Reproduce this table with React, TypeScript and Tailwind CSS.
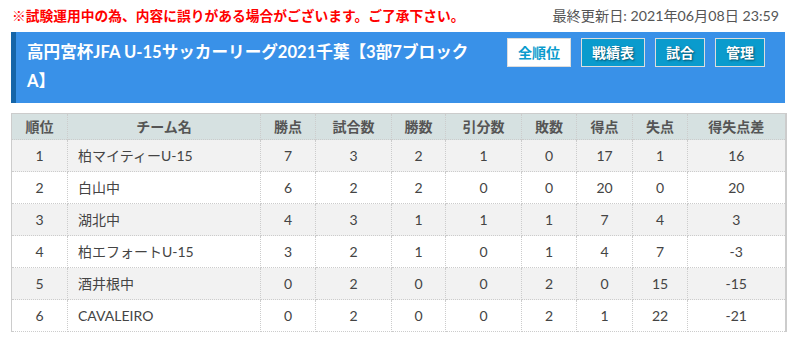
const rows = [
  { rank: 1, team: '柏マイティーU-15', pts: 7, games: 3, win: 2, draw: 1, lose: 0, gf: 17, ga: 1, diff: 16 },
  { rank: 2, team: '白山中', pts: 6, games: 2, win: 2, draw: 0, lose: 0, gf: 20, ga: 0, diff: 20 },
  { rank: 3, team: '湖北中', pts: 4, games: 3, win: 1, draw: 1, lose: 1, gf: 7, ga: 4, diff: 3 },
  { rank: 4, team: '柏エフォートU-15', pts: 3, games: 2, win: 1, draw: 0, lose: 1, gf: 4, ga: 7, diff: -3 },
  { rank: 5, team: '酒井根中', pts: 0, games: 2, win: 0, draw: 0, lose: 2, gf: 0, ga: 15, diff: -15 },
  { rank: 6, team: 'CAVALEIRO', pts: 0, games: 2, win: 0, draw: 0, lose: 2, gf: 1, ga: 22, diff: -21 },
]

const heads = ['順位', 'チーム名', '勝点', '試合数', '勝数', '引分数', '敗数', '得点', '失点', '得失点差']
const widths = [56, 193, 55, 76, 54, 76, 55, 56, 55, 98]

export default function App() {
  return (
    <div className="w-[799px] bg-white font-['Lato','Noto_Sans_CJK_JP',sans-serif] text-[#444]">
      <div className="ml-[11px] w-[774px]">
        <div className="flex h-[32px] items-center justify-between pl-px pr-[6px]">
          <p className="text-[13.75px] font-bold text-[#f00]">※試験運用中の為、内容に誤りがある場合がございます。ご了承下さい。</p>
          <p className="text-[14.2px] text-[#555]">最終更新日: 2021年06月08日 23:59</p>
        </div>

        <div className="flex items-start border-l-[5px] border-[#1565a8] bg-[#3991e8] pt-[6px] pb-[7px] pl-[11px] pr-[20px]">
          <h1 className="w-[452px] text-[16.6px] font-bold leading-[29px] text-white">
            高円宮杯JFA U-15サッカーリーグ2021千葉【3部7ブロック A】
          </h1>
          <div className="ml-auto flex gap-[10px]">
            <Btn label="全順位" active />
            <Btn label="戦績表" />
            <Btn label="試合" />
            <Btn label="管理" />
          </div>
        </div>

        <table className="mt-[10px] w-[774px] table-fixed border-collapse border-t border-l border-r-2 border-solid border-[#ccc] text-[14px]">
          <colgroup>
            {widths.map((w, i) => (
              <col key={i} style={{ width: w }} />
            ))}
          </colgroup>
          <thead>
            <tr className="h-[26px] bg-[#d6e1e1]">
              {heads.map((h) => (
                <th key={h} className="border-x border-dotted border-[#ccc] text-center font-bold text-[#555]">
                  {h}
                </th>
              ))}
            </tr>
          </thead>
          <tbody>
            {rows.map((r, i) => (
              <tr key={r.rank} className={`h-[32px] ${i % 2 === 0 ? 'bg-[#f2f2f2]' : 'bg-white'}`}>
                <Td>{r.rank}</Td>
                <td className="border border-dotted border-[#ccc] pl-[10px] text-left">{r.team}</td>
                <Td>{r.pts}</Td>
                <Td>{r.games}</Td>
                <Td>{r.win}</Td>
                <Td>{r.draw}</Td>
                <Td>{r.lose}</Td>
                <Td>{r.gf}</Td>
                <Td>{r.ga}</Td>
                <Td>{r.diff}</Td>
              </tr>
            ))}
          </tbody>
        </table>
      </div>
    </div>
  )
}

function Td({ children }: { children: React.ReactNode }) {
  return <td className="border border-dotted border-[#ccc] text-center">{children}</td>
}

function Btn({ label, active }: { label: string; active?: boolean }) {
  return (
    <span
      className={`flex h-[29px] items-center border border-[#ddd] px-[10px] text-[14px] font-bold ${
        active ? 'bg-white text-[#0a9bcd]' : 'bg-[#0a9bcd] text-white [text-shadow:1px_1px_2px_rgba(0,0,0,0.5)]'
      }`}
    >
      {label}
    </span>
  )
}
